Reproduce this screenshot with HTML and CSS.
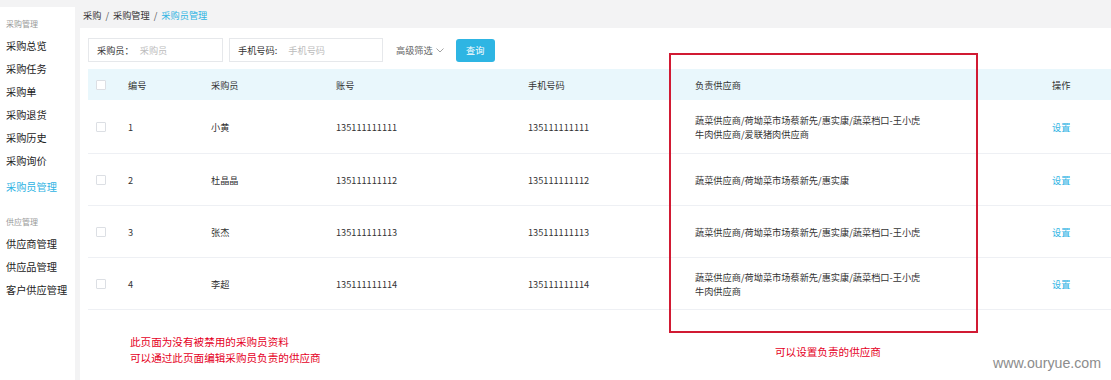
FILE: index.html
```html
<!DOCTYPE html>
<html lang="zh-CN">
<head>
  <meta charset="UTF-8" />
  <title>采购员管理</title>
  <link rel="stylesheet" href="styles.css">
</head>
<body>

<div class="layout">
  <!-- Sidebar -->
  <aside class="sidebar">
    <div class="side-title">采购管理</div>
    <a class="side-item">采购总览</a>
    <a class="side-item">采购任务</a>
    <a class="side-item">采购单</a>
    <a class="side-item">采购退货</a>
    <a class="side-item">采购历史</a>
    <a class="side-item">采购询价</a>
    <a class="side-item active">采购员管理</a>
    <div class="side-title second">供应管理</div>
    <a class="side-item">供应商管理</a>
    <a class="side-item">供应品管理</a>
    <a class="side-item">客户供应管理</a>
  </aside>

  <main class="main">
    <div class="crumb">
      <span>采购</span><span class="sep">/</span><span>采购管理</span><span class="sep">/</span><span class="current">采购员管理</span>
    </div>

    <section class="card">
      <!-- Filters -->
      <div class="filters">
        <div class="field field-name"><span class="label">采购员：</span><span class="placeholder">采购员</span></div>
        <div class="field field-phone"><span class="label">手机号码:</span><span class="placeholder">手机号码</span></div>
        <div class="advanced">高级筛选
          <svg width="8" height="5" viewBox="0 0 8 5"><path d="M0.5 0.5 L4 4 L7.5 0.5" fill="none" stroke="#999" stroke-width="0.9"/></svg>
        </div>
        <button class="btn-search">查询</button>
      </div>

      <!-- Table -->
      <div class="table">
        <div class="row head">
          <div class="cell"><span class="check"></span></div>
          <div class="cell">编号</div>
          <div class="cell">采购员</div>
          <div class="cell">账号</div>
          <div class="cell">手机号码</div>
          <div class="cell">负责供应商</div>
          <div class="cell">操作</div>
        </div>
        <div class="row tall">
          <div class="cell"><span class="check"></span></div>
          <div class="cell">1</div>
          <div class="cell">小黄</div>
          <div class="cell">135111111111</div>
          <div class="cell">135111111111</div>
          <div class="cell">蔬菜供应商/荷坳菜市场蔡新先/惠实康/蔬菜档口-王小虎<br>牛肉供应商/爱联猪肉供应商</div>
          <div class="cell"><a class="link">设置</a></div>
        </div>
        <div class="row">
          <div class="cell"><span class="check"></span></div>
          <div class="cell">2</div>
          <div class="cell">杜晶晶</div>
          <div class="cell">135111111112</div>
          <div class="cell">135111111112</div>
          <div class="cell">蔬菜供应商/荷坳菜市场蔡新先/惠实康</div>
          <div class="cell"><a class="link">设置</a></div>
        </div>
        <div class="row">
          <div class="cell"><span class="check"></span></div>
          <div class="cell">3</div>
          <div class="cell">张杰</div>
          <div class="cell">135111111113</div>
          <div class="cell">135111111113</div>
          <div class="cell">蔬菜供应商/荷坳菜市场蔡新先/惠实康/蔬菜档口-王小虎</div>
          <div class="cell"><a class="link">设置</a></div>
        </div>
        <div class="row">
          <div class="cell"><span class="check"></span></div>
          <div class="cell">4</div>
          <div class="cell">李超</div>
          <div class="cell">135111111114</div>
          <div class="cell">135111111114</div>
          <div class="cell">蔬菜供应商/荷坳菜市场蔡新先/惠实康/蔬菜档口-王小虎<br>牛肉供应商</div>
          <div class="cell"><a class="link">设置</a></div>
        </div>
      </div>
    </section>
  </main>
</div>

<!-- Annotations -->
<div class="note-box"></div>
<div class="note note-left">此页面为没有被禁用的采购员资料<br>可以通过此页面编辑采购员负责的供应商</div>
<div class="note note-right">可以设置负责的供应商</div>
<div class="watermark">www.ouryue.com</div>

</body>
</html>
```

FILE: styles.css
```css
body {
  margin: 0;
  background-color: #f3f3f4;
  font-family: "Noto Sans CJK SC", "Noto Sans", sans-serif;
  color: #333;
  width: 1111px;
  height: 380px;
  overflow: hidden;
  position: relative;
}

.layout {
  display: flex;
  height: 380px;
}

/* Sidebar */
.sidebar {
  width: 75px;
  margin-top: 7px;
  background: #fff;
  padding: 10px 0 0 6px;
  box-sizing: border-box;
  display: flex;
  flex-direction: column;
}

.side-title {
  font-size: 8px;
  line-height: 14px;
  color: #999;
  margin-bottom: 3px;
}

.side-title.second {
  margin-top: 17px;
}

.side-item {
  font-size: 10.2px;
  line-height: 23px;
  color: #222;
  white-space: nowrap;
}

.side-item.active {
  color: #2eb3e3;
  margin-top: 3px;
}

/* Main */
.main {
  flex: 1;
  margin-left: 5px;
  display: flex;
  flex-direction: column;
}

.crumb {
  height: 28px;
  line-height: 30px;
  padding-left: 3px;
  font-size: 9.2px;
  color: #333;
}

.crumb .sep {
  margin: 0 4px;
  color: #555;
}

.crumb .current {
  color: #2eb3e3;
}

.card {
  flex: 1;
  background: #fff;
  padding: 10px 0 0 8px;
}

/* Filters */
.filters {
  display: flex;
  align-items: center;
  height: 24px;
  font-size: 9.2px;
}

.field {
  height: 24px;
  box-sizing: border-box;
  border: 1px solid #e6e8eb;
  display: flex;
  align-items: center;
  padding-left: 8px;
  margin-right: 6px;
}

.field-name { width: 135px; }
.field-phone { width: 154px; }

.field .label { color: #333; margin-right: 6px; }
.field .placeholder { color: #bcbcbc; }
.field-phone .label { margin-right: 11px; }

.advanced {
  margin-left: 7px;
  color: #666;
  display: flex;
  align-items: center;
  gap: 3px;
}

.btn-search {
  margin-left: 12px;
  width: 39px;
  height: 23px;
  border: none;
  border-radius: 3px;
  background: #2eb5e3;
  color: #fff;
  font: inherit;
  padding: 0;
}

/* Table */
.table {
  margin-top: 7px;
  font-size: 9.2px;
}

.row {
  display: grid;
  grid-template-columns: 40px 83px 125px 192px 167px 357px 1fr;
  align-items: center;
  height: 52px;
  border-bottom: 1px solid #eef0f4;
  box-sizing: border-box;
}

.row.head {
  height: 31px;
  background: #e9f7fc;
  border-bottom: none;
}

.row.tall {
  height: 54px;
}

.cell {
  line-height: 14px;
  white-space: nowrap;
}

.cell:first-child {
  padding-left: 8px;
  display: flex;
}

.check {
  width: 10px;
  height: 10px;
  box-sizing: border-box;
  border: 1px solid #dcdfe4;
  border-radius: 1px;
  background: #fff;
}

.link {
  color: #2eb3e3;
}

/* Annotations */
.note-box {
  position: absolute;
  left: 669px;
  top: 53px;
  width: 309px;
  height: 280px;
  box-sizing: border-box;
  border: 2px solid #d11a33;
}

.note {
  position: absolute;
  color: #e5001e;
  font-size: 10.6px;
  line-height: 16px;
}

.note-left {
  left: 130px;
  top: 334px;
}

.note-right {
  left: 775px;
  top: 344px;
}

.watermark {
  position: absolute;
  left: 993px;
  top: 355px;
  font-family: "Liberation Sans", Arial, sans-serif;
  font-size: 14.2px;
  color: #8c8c8c;
  line-height: 16px;
}
```
